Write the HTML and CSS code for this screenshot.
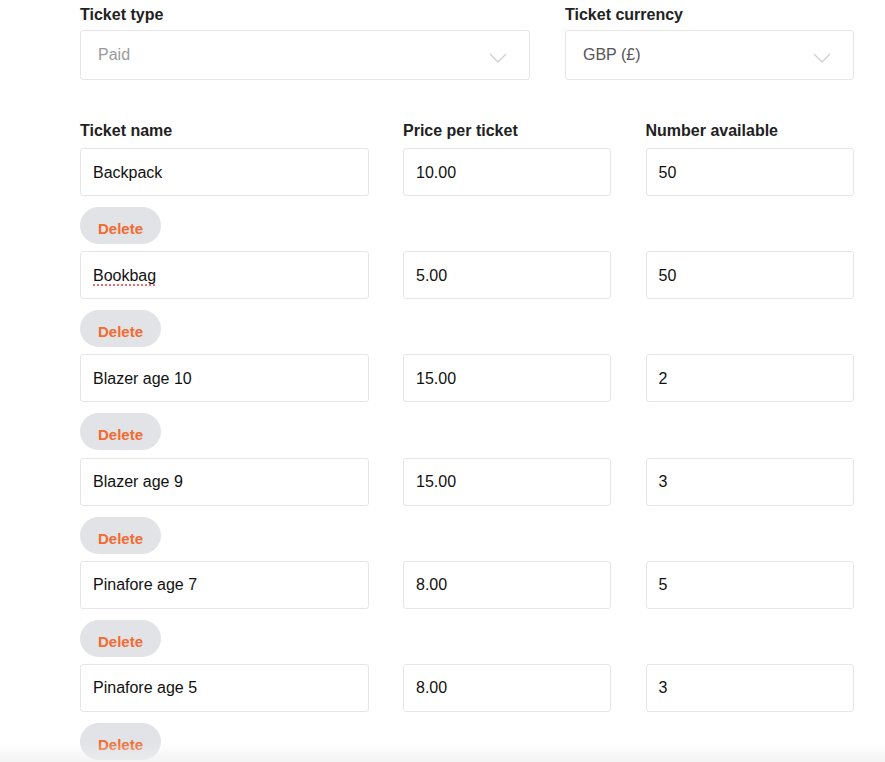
FILE: index.html
```html
<!DOCTYPE html>
<html lang="en">
<head>
<meta charset="utf-8">
<title>Tickets</title>
<link rel="stylesheet" href="styles.css">
</head>
<body>
<div class="page">
  <div class="top">
    <div class="group">
      <div class="label">Ticket type</div>
      <div class="select muted">Paid
        <svg class="chev" width="18" height="10" viewBox="0 0 18 10"><path d="M1 1l8 8 8-8" fill="none" stroke="#d0d0d0" stroke-width="1.3"/></svg>
      </div>
    </div>
    <div class="group">
      <div class="label">Ticket currency</div>
      <div class="select">GBP (£)
        <svg class="chev" width="18" height="10" viewBox="0 0 18 10"><path d="M1 1l8 8 8-8" fill="none" stroke="#d0d0d0" stroke-width="1.3"/></svg>
      </div>
    </div>
  </div>

  <div class="tickets">
    <div class="head">Ticket name</div>
    <div class="head">Price per ticket</div>
    <div class="head">Number available</div>

    <div class="field">Backpack</div><div class="field">10.00</div><div class="field">50</div>
    <div class="actions"><button class="del">Delete</button></div>

    <div class="field"><span class="spell">Bookbag</span></div><div class="field">5.00</div><div class="field">50</div>
    <div class="actions"><button class="del">Delete</button></div>

    <div class="field">Blazer age 10</div><div class="field">15.00</div><div class="field">2</div>
    <div class="actions"><button class="del">Delete</button></div>

    <div class="field">Blazer age 9</div><div class="field">15.00</div><div class="field">3</div>
    <div class="actions"><button class="del">Delete</button></div>

    <div class="field">Pinafore age 7</div><div class="field">8.00</div><div class="field">5</div>
    <div class="actions"><button class="del">Delete</button></div>

    <div class="field">Pinafore age 5</div><div class="field">8.00</div><div class="field">3</div>
    <div class="actions"><button class="del">Delete</button></div>
  </div>
</div>
<div class="fade"></div>
</body>
</html>
```
FILE: styles.css
```css
html, body {
  margin: 0;
  padding: 0;
  background: #fff;
  font-family: "Liberation Sans", Arial, Helvetica, sans-serif;
  color: #111;
}
.page {
  padding: 5px 0 0 80px;
  width: 774px;
}
.top {
  display: grid;
  grid-template-columns: 450px 289px;
  column-gap: 35px;
}
.label, .head {
  font-size: 16px;
  font-weight: bold;
  line-height: 20px;
  color: #222;
}
.label { margin-bottom: 5px; }
.select {
  height: 50px;
  box-sizing: border-box;
  border: 1px solid #e6e6e6;
  border-radius: 3px;
  display: flex;
  align-items: center;
  justify-content: space-between;
  padding: 0 22px 0 17px;
  font-size: 16px;
  color: #555;
}
.select.muted { color: #9a9a9a; }
.chev { margin-top: 6px; }
.tickets {
  margin-top: 41px;
  display: grid;
  grid-template-columns: 288.5px 208px 208px;
  column-gap: 34.5px;
}
.head { margin-bottom: 7px; }
.field {
  height: 48px;
  box-sizing: border-box;
  border: 1px solid #e6e6e6;
  border-radius: 3px;
  display: flex;
  align-items: center;
  padding: 1px 12px 0;
  font-size: 16px;
  color: #111;
}
.spell {
  text-decoration: underline dotted #e8474d;
  text-underline-offset: 4px;
}
.actions {
  grid-column: 1 / -1;
  padding: 11px 0 7.2px;
}
.del {
  display: block;
  width: 81px;
  height: 37px;
  border: none;
  border-radius: 19px;
  background: #e1e3e7;
  color: #f26b2f;
  font-family: "Liberation Sans", Arial, sans-serif;
  font-weight: bold;
  font-size: 15px;
  padding: 6px 0 0;
}
.fade {
  position: fixed;
  left: 0;
  right: 0;
  bottom: 0;
  height: 20px;
  background: linear-gradient(to bottom, rgba(240,240,240,0), rgba(240,240,240,0.7));
  pointer-events: none;
}
```
